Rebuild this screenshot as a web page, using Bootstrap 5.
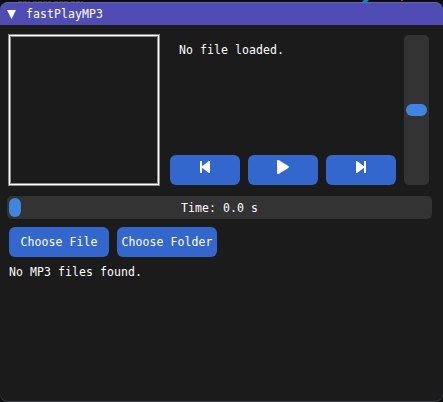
<!DOCTYPE html>
<html lang="en" data-bs-theme="dark">
<head>
<meta charset="utf-8">
<title>fastPlayMP3</title>
<link href="https://cdn.jsdelivr.net/npm/bootstrap@5.3.0/dist/css/bootstrap.min.css" rel="stylesheet">
<style>
body{background:#0c0d12;height:402px;overflow:hidden;font:11.5px/13px "DejaVu Sans Mono",monospace;letter-spacing:.077px;color:#fff}
.backdrop-strip{height:2px}
.player{width:443px;height:400px;background:#1b1b1b;border-radius:8px;box-shadow:inset 0 -1px #41414a}
.titlebar{height:23px;background:#4f4db3;border-top:1px solid #6564ac;border-radius:8px 8px 0 0;padding-left:7px}
.titlebar svg{margin-right:10px}
.content{padding:9px 11px 0 8px}
.cover{width:152px;height:152px;border:1px solid #8c8c8c;padding:1px;background:#fff}
.cover-inner{height:148px;border:1px solid #8c8c8c;background:#1b1b1b}
.info{width:226px;margin-left:10px;height:151px}
.status{padding:10px 0 0 9px}
.btn.blue{--bs-btn-padding-x:0;--bs-btn-padding-y:0;--bs-btn-bg:#3367ce;--bs-btn-color:#fff;--bs-btn-border-width:0;--bs-btn-border-radius:6px;--bs-btn-font-size:11.5px;--bs-btn-line-height:13px;height:30px;font-family:inherit;letter-spacing:inherit}
.transport{width:70px}
.pick{width:100px}
.volume{width:25px;height:150px;margin:1px 0 0 8px;background:#333;border-radius:5px;padding:69px 2px 0}
.knob{background:#3f86e3;border-radius:6px}
.volume .knob{height:12px;width:21px}
.seek{width:425px;height:23px;margin:10px 0 8px -1px;background:#333;border-radius:5px;padding:2px}
.seek .knob{width:12px;height:19px}
.seek-label{padding:1px 0 0 160px}
.pickers,.library{margin-left:1px}
.library{margin-top:9px}
</style>
<script src="https://cdn.jsdelivr.net/npm/bootstrap@5.3.0/dist/js/bootstrap.bundle.min.js"></script>
</head>
<body>
<div class="backdrop-strip">
  <svg class="d-block" width="443" height="2"><path d="M18 1.5H30M33 1.5H51M54 1.5H68M71 1.5H83" stroke="#34353a" stroke-dasharray="4 1"/><path d="M362 2L364 0H369L367 2Z" fill="#078bd0"/><path d="M401 0h2v1h-2z" fill="#c0392b"/></svg>
</div>
<main class="player d-flex flex-column">
  <header class="titlebar d-flex align-items-center">
    <svg width="9" height="9"><path d="M0 0H9L4.5 9Z" fill="#fff"/></svg>
    <span>fastPlayMP3</span>
  </header>
  <section class="content d-flex flex-column">
    <div class="d-flex">
      <div class="cover"><div class="cover-inner"></div></div>
      <div class="info d-flex flex-column justify-content-between">
        <div class="status">No file loaded.</div>
        <div class="d-flex gap-2">
          <button class="btn blue transport d-flex" aria-label="Previous"><svg width="70" height="30" fill="#fff"><path d="M30 6h2v12h-2zM40 6v12h-1L32 12.7v-1.4L39 6z"/></svg></button>
          <button class="btn blue transport d-flex" aria-label="Play"><svg width="70" height="30" fill="#fff"><path d="M29 5.6Q29 5 30 5L31 5.2L40.3 11Q41.8 12 40.3 13L31 18.8L30 19Q29 19 29 18.3Z"/></svg></button>
          <button class="btn blue transport d-flex" aria-label="Next"><svg width="70" height="30" fill="#fff"><path d="M38 6h2v12h-2zM30 6v12h1L38 12.7v-1.4L31 6z"/></svg></button>
        </div>
      </div>
      <div class="volume"><div class="knob"></div></div>
    </div>
    <div class="seek d-flex align-items-center"><div class="knob"></div><span class="seek-label">Time: 0.0 s</span></div>
    <div class="pickers d-flex gap-2">
      <button class="btn blue pick">Choose File</button>
      <button class="btn blue pick">Choose Folder</button>
    </div>
    <div class="library">No MP3 files found.</div>
  </section>
</main>
</body>
</html>
